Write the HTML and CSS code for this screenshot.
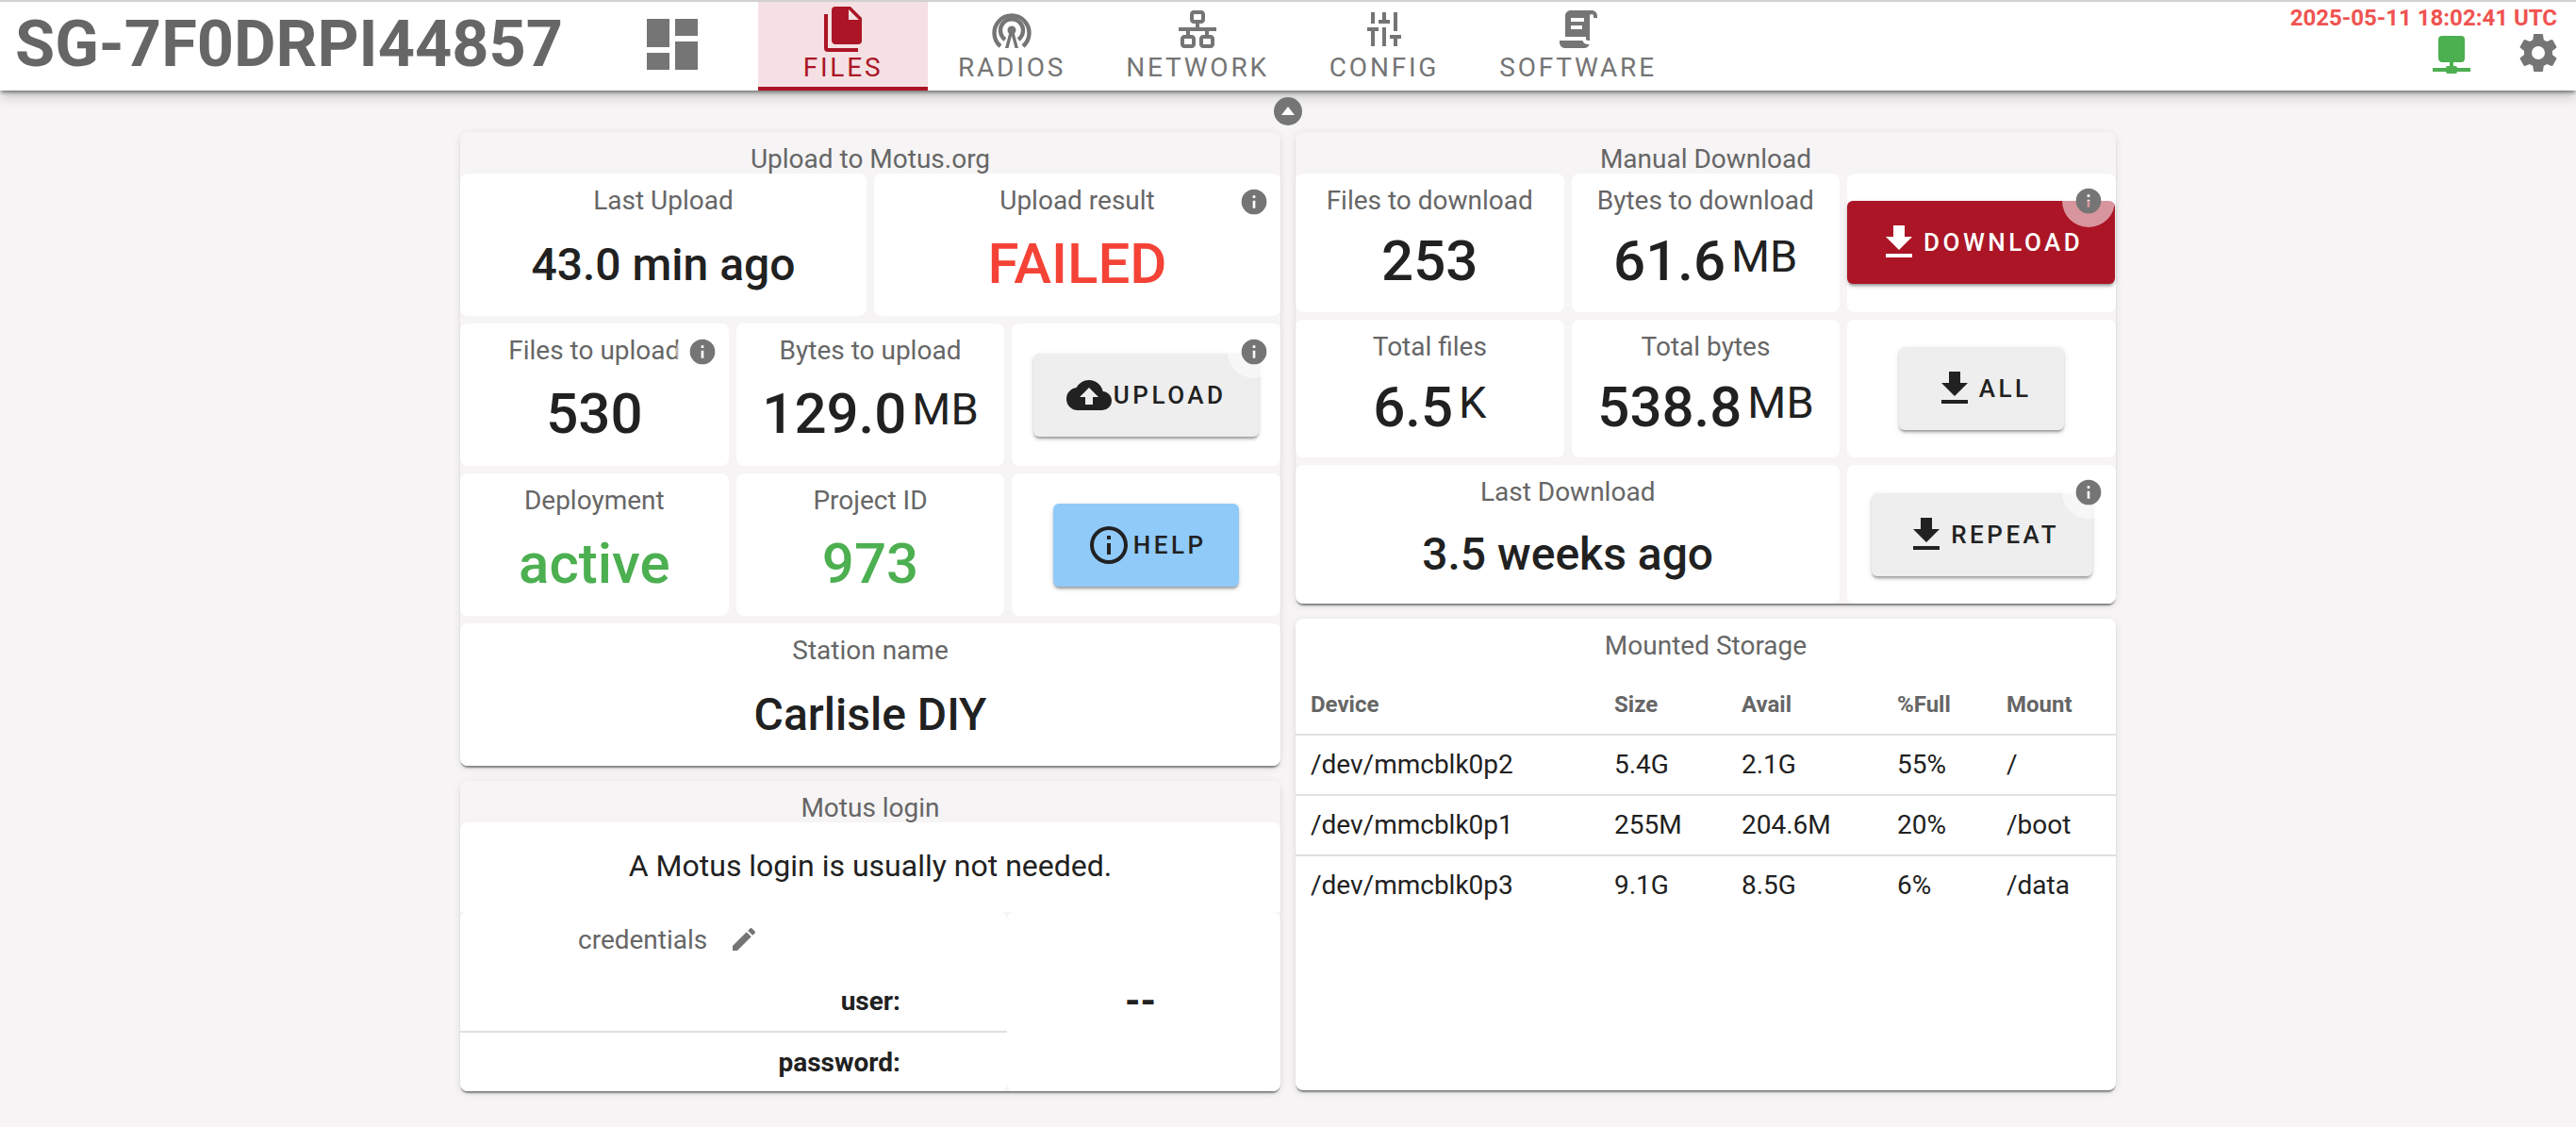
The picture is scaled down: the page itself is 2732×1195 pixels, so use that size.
FILE: index.html
```html
<!DOCTYPE html>
<html lang="en">
<head>
    <meta charset="UTF-8">
    <title>SG-7F0DRPI44857</title>
    <link rel="stylesheet" href="styles.css">
</head>
<body>
    <header class="topbar">
        <div class="station-id">SG-7F0DRPI44857</div>
        <svg class="icon icon-dash" viewBox="0 0 24 24"><path d="M13,3V9H21V3M13,21H21V11H13M3,21H11V15H3M3,13H11V3H3V13Z"/></svg>
        <nav class="tabs">
            <div class="tab active">
                <svg class="icon" viewBox="0 0 24 24"><path d="M15,7H20.5L15,1.5V7M8,0H16L22,6V18A2,2 0 0,1 20,20H8C6.89,20 6,19.1 6,18V2A2,2 0 0,1 8,0M4,4V22H20V24H4A2,2 0 0,1 2,22V4H4Z"/></svg>
                <span>FILES</span>
            </div>
            <div class="tab">
                <svg class="icon" viewBox="0 0 48 48"><circle cx="24" cy="25" r="4.5"/><path d="M21.5 27 L17 44 H20.5 L24 31 L27.5 44 H31 L26.5 27Z"/><path class="arc" d="M17 35 A12 12 0 1 1 31 35"/><path class="arc" d="M12 42 A18.5 18.5 0 1 1 36 42"/></svg>
                <span>RADIOS</span>
            </div>
            <div class="tab">
                <svg class="icon" viewBox="0 0 24 24"><path d="M10,2C8.89,2 8,2.89 8,4V7C8,8.11 8.89,9 10,9H11V11H2V13H6V15H5C3.89,15 3,15.89 3,17V20C3,21.11 3.89,22 5,22H9C10.11,22 11,21.11 11,20V17C11,15.89 10.11,15 9,15H8V13H16V15H15C13.89,15 13,15.89 13,17V20C13,21.11 13.89,22 15,22H19C20.11,22 21,21.11 21,20V17C21,15.89 20.11,15 19,15H18V13H22V11H13V9H14C15.11,9 16,8.11 16,7V4C16,2.89 15.11,2 14,2H10M10,4H14V7H10V4M5,17H9V20H5V17M15,17H19V20H15V17Z"/></svg>
                <span>NETWORK</span>
            </div>
            <div class="tab">
                <svg class="icon" viewBox="0 0 24 24"><path d="M5,3H7V9H5ZM3,11H9V13H7V21H5V13H3ZM11,3H13V7H15V9H9V7H11ZM11,11H13V21H11ZM17,3H19V13H17ZM15,15H21V17H19V21H17V17H15Z"/></svg>
                <span>CONFIG</span>
            </div>
            <div class="tab">
                <svg class="icon" viewBox="0 0 24 24"><path d="M17.8,20C17.4,21.2 16.3,22 15,22H5C3.3,22 2,20.7 2,19V18H5L14.2,18C14.6,19.2 15.7,20 17,20H17.8M19,2C20.7,2 22,3.3 22,5V6H20V5C20,4.4 19.6,4 19,4C18.4,4 18,4.4 18,5V18H17C16.4,18 16,17.6 16,17V16H5V5C5,3.3 6.3,2 8,2H19M8,6V8H15V6H8M8,10V12H14V10H8Z"/></svg>
                <span>SOFTWARE</span>
            </div>
        </nav>
        <div class="status">
            <div class="clock">2025-05-11 18:02:41 UTC</div>
            <div class="status-icons">
                <svg class="icon icon-ok" viewBox="0 0 24 24"><path d="M17,3A2,2 0 0,1 19,5V15A2,2 0 0,1 17,17H13V19H14A1,1 0 0,1 15,20H22V22H15A1,1 0 0,1 14,23H10A1,1 0 0,1 9,22H2V20H9A1,1 0 0,1 10,19H11V17H7C5.89,17 5,16.1 5,15V5A2,2 0 0,1 7,3H17Z"/></svg>
                <svg class="icon" viewBox="0 0 24 24"><path d="M12,15.5A3.5,3.5 0 0,1 8.5,12A3.5,3.5 0 0,1 12,8.5A3.5,3.5 0 0,1 15.5,12A3.5,3.5 0 0,1 12,15.5M19.43,12.97C19.47,12.65 19.5,12.33 19.5,12C19.5,11.67 19.47,11.34 19.43,11L21.54,9.37C21.73,9.22 21.78,8.95 21.66,8.73L19.66,5.27C19.54,5.05 19.27,4.96 19.05,5.05L16.56,6.05C16.04,5.66 15.5,5.32 14.87,5.07L14.5,2.42C14.46,2.18 14.25,2 14,2H10C9.75,2 9.54,2.18 9.5,2.42L9.13,5.07C8.5,5.32 7.96,5.66 7.44,6.05L4.95,5.05C4.73,4.96 4.46,5.05 4.34,5.27L2.34,8.73C2.21,8.95 2.27,9.22 2.46,9.37L4.57,11C4.53,11.34 4.5,11.67 4.5,12C4.5,12.33 4.53,12.65 4.57,12.97L2.46,14.63C2.27,14.78 2.21,15.05 2.34,15.27L4.34,18.73C4.46,18.95 4.73,19.03 4.95,18.95L7.44,17.94C7.96,18.34 8.5,18.68 9.13,18.93L9.5,21.58C9.54,21.82 9.75,22 10,22H14C14.25,22 14.46,21.82 14.5,21.58L14.87,18.93C15.5,18.67 16.04,18.34 16.56,17.94L19.05,18.95C19.27,19.03 19.54,18.95 19.66,18.73L21.66,15.27C21.78,15.05 21.73,14.78 21.54,14.63L19.43,12.97Z"/></svg>
            </div>
        </div>
    </header>

    <button class="collapse" type="button"><svg viewBox="0 0 30 30"><path d="M15 10 L22 19 H8Z"/></svg></button>

    <main class="columns">
        <div class="column">
            <section class="card">
                <h2 class="card-title">Upload to Motus.org</h2>
                <div class="row row-2">
                    <div class="cell">
                        <div class="label">Last Upload</div>
                        <div class="value value-text">43.0 min ago</div>
                    </div>
                    <div class="cell">
                        <div class="label">Upload result</div>
                        <div class="value value-bad">FAILED</div>
                        <span class="info"><svg viewBox="0 0 24 24"><path d="M13,9H11V7H13M13,17H11V11H13M12,2A10,10 0 0,0 2,12A10,10 0 0,0 12,22A10,10 0 0,0 22,12A10,10 0 0,0 12,2Z"/></svg></span>
                    </div>
                </div>
                <div class="row row-3">
                    <div class="cell">
                        <div class="label">Files to upload</div>
                        <div class="value">530</div>
                        <span class="info"><svg viewBox="0 0 24 24"><path d="M13,9H11V7H13M13,17H11V11H13M12,2A10,10 0 0,0 2,12A10,10 0 0,0 12,22A10,10 0 0,0 22,12A10,10 0 0,0 12,2Z"/></svg></span>
                    </div>
                    <div class="cell">
                        <div class="label">Bytes to upload</div>
                        <div class="value">129.0<span class="unit">MB</span></div>
                    </div>
                    <div class="cell cell-action">
                        <button class="btn" type="button">
                            <svg viewBox="0 0 24 24"><path d="M14,13V17H10V13H7L12,8L17,13M19.35,10.03C18.67,6.59 15.64,4 12,4C9.11,4 6.6,5.64 5.35,8.03C2.34,8.36 0,10.9 0,14A6,6 0 0,0 6,20H19A5,5 0 0,0 24,15C24,12.36 21.95,10.22 19.35,10.03Z"/></svg>
                            UPLOAD
                        </button>
                        <span class="info"><svg viewBox="0 0 24 24"><path d="M13,9H11V7H13M13,17H11V11H13M12,2A10,10 0 0,0 2,12A10,10 0 0,0 12,22A10,10 0 0,0 22,12A10,10 0 0,0 12,2Z"/></svg></span>
                    </div>
                </div>
                <div class="row row-3">
                    <div class="cell">
                        <div class="label">Deployment</div>
                        <div class="value value-good">active</div>
                    </div>
                    <div class="cell">
                        <div class="label">Project ID</div>
                        <div class="value value-good">973</div>
                    </div>
                    <div class="cell cell-action">
                        <button class="btn btn-help" type="button">
                            <svg viewBox="0 0 24 24"><path d="M11,9H13V7H11M12,20C7.59,20 4,16.41 4,12C4,7.59 7.59,4 12,4C16.41,4 20,7.59 20,12C20,16.41 16.41,20 12,20M12,2A10,10 0 0,0 2,12A10,10 0 0,0 12,22A10,10 0 0,0 22,12A10,10 0 0,0 12,2M11,17H13V11H11V17Z"/></svg>
                            HELP
                        </button>
                    </div>
                </div>
                <div class="row">
                    <div class="cell">
                        <div class="label">Station name</div>
                        <div class="value value-text">Carlisle DIY</div>
                    </div>
                </div>
            </section>

            <section class="card card-fill">
                <h2 class="card-title">Motus login</h2>
                <div class="login-note">A Motus login is usually not needed.</div>
                <div class="login-grid">
                    <div class="login-left">
                        <div class="credentials">
                            credentials
                            <svg viewBox="0 0 24 24"><path d="M20.71,7.04C21.1,6.65 21.1,6 20.71,5.63L18.37,3.29C18,2.9 17.35,2.9 16.96,3.29L15.12,5.12L18.87,8.87M3,17.25V21H6.75L17.81,9.93L14.06,6.18L3,17.25Z"/></svg>
                        </div>
                        <div class="login-row login-row-line">user:</div>
                        <div class="login-row">password:</div>
                    </div>
                    <div class="login-right">--</div>
                </div>
            </section>
        </div>

        <div class="column">
            <section class="card card-dl">
                <h2 class="card-title">Manual Download</h2>
                <div class="row row-3">
                    <div class="cell">
                        <div class="label">Files to download</div>
                        <div class="value">253</div>
                    </div>
                    <div class="cell">
                        <div class="label">Bytes to download</div>
                        <div class="value">61.6<span class="unit">MB</span></div>
                    </div>
                    <div class="cell cell-action">
                        <button class="btn btn-primary" type="button">
                            <svg viewBox="0 0 24 24"><path d="M5,20H19V18H5M19,9H15V3H9V9H5L12,16L19,9Z"/></svg>
                            DOWNLOAD
                        </button>
                        <span class="info info-tight"><svg viewBox="0 0 24 24"><path d="M13,9H11V7H13M13,17H11V11H13M12,2A10,10 0 0,0 2,12A10,10 0 0,0 12,22A10,10 0 0,0 22,12A10,10 0 0,0 12,2Z"/></svg></span>
                    </div>
                </div>
                <div class="row row-3">
                    <div class="cell">
                        <div class="label">Total files</div>
                        <div class="value">6.5<span class="unit">K</span></div>
                    </div>
                    <div class="cell">
                        <div class="label">Total bytes</div>
                        <div class="value">538.8<span class="unit">MB</span></div>
                    </div>
                    <div class="cell cell-action">
                        <button class="btn" type="button">
                            <svg viewBox="0 0 24 24"><path d="M5,20H19V18H5M19,9H15V3H9V9H5L12,16L19,9Z"/></svg>
                            ALL
                        </button>
                    </div>
                </div>
                <div class="row row-3">
                    <div class="cell cell-wide">
                        <div class="label">Last Download</div>
                        <div class="value value-text">3.5 weeks ago</div>
                    </div>
                    <div class="cell cell-action">
                        <button class="btn" type="button">
                            <svg viewBox="0 0 24 24"><path d="M5,20H19V18H5M19,9H15V3H9V9H5L12,16L19,9Z"/></svg>
                            REPEAT
                        </button>
                        <span class="info info-tight"><svg viewBox="0 0 24 24"><path d="M13,9H11V7H13M13,17H11V11H13M12,2A10,10 0 0,0 2,12A10,10 0 0,0 12,22A10,10 0 0,0 22,12A10,10 0 0,0 12,2Z"/></svg></span>
                    </div>
                </div>
            </section>

            <section class="card card-fill card-white">
                <h2 class="card-title">Mounted Storage</h2>
                <table class="storage">
                    <thead>
                        <tr><th class="col-device">Device</th><th class="col-size">Size</th><th class="col-avail">Avail</th><th class="col-full">%Full</th><th>Mount</th></tr>
                    </thead>
                    <tbody>
                        <tr><td>/dev/mmcblk0p2</td><td>5.4G</td><td>2.1G</td><td>55%</td><td>/</td></tr>
                        <tr><td>/dev/mmcblk0p1</td><td>255M</td><td>204.6M</td><td>20%</td><td>/boot</td></tr>
                        <tr><td>/dev/mmcblk0p3</td><td>9.1G</td><td>8.5G</td><td>6%</td><td>/data</td></tr>
                    </tbody>
                </table>
            </section>
        </div>
    </main>
</body>
</html>
```
FILE: styles.css
```css
* {
    box-sizing: border-box;
}
html, body {
    height: 100%;
}
body {
    margin: 0;
    overflow: hidden;
    background-color: #f6f4f5;
    font-family: Roboto, "Liberation Sans", sans-serif;
    color: #212121;
}
.icon {
    display: block;
    width: 48px;
    height: 48px;
    fill: #757575;
}
.topbar {
    position: relative;
    display: flex;
    height: 96px;
    background-color: white;
    border-top: 2px solid #d0d0d0;
    box-shadow: 0 3px 4px -1px rgba(0,0,0,0.45), 0 6px 14px rgba(0,0,0,0.2);
}
.station-id {
    width: 677px;
    padding-left: 16px;
    font-size: 68.5px;
    font-weight: 700;
    line-height: 90px;
    color: #666;
    white-space: nowrap;
}
.icon-dash {
    width: 72px;
    height: 72px;
    margin-top: 9px;
}
.tabs {
    display: flex;
    margin-left: 55px;
}
.tab {
    display: flex;
    flex-direction: column;
    align-items: center;
    min-width: 178px;
    padding: 5px 32px 0;
    font-size: 28px;
    line-height: 30px;
    letter-spacing: 2.8px;
    color: #757575;
}
.tab span {
    margin-top: 2px;
}
.tab.active {
    width: 180px;
    color: #ab1526;
    background-color: #f5e1e3;
    border-bottom: 4px solid #ab1526;
}
.tab.active .icon {
    fill: #ab1526;
}
.arc {
    fill: none;
    stroke: #757575;
    stroke-width: 4.4;
}
.status {
    display: flex;
    flex-direction: column;
    align-items: flex-end;
    margin-left: auto;
    padding-right: 16px;
}
.clock {
    height: 30px;
    margin-right: 4px;
    font-size: 24px;
    font-weight: 700;
    line-height: 34px;
    color: #ef5350;
    white-space: nowrap;
}
.status-icons {
    display: flex;
    gap: 44px;
}
.icon-ok {
    fill: #4caf50;
}
.collapse {
    position: absolute;
    top: 103px;
    left: 1351px;
    width: 30px;
    height: 30px;
    padding: 0;
    background-color: #757575;
    border: none;
    border-radius: 50%;
}
.collapse svg {
    display: block;
    fill: white;
}
.columns {
    display: grid;
    grid-template-columns: 870px 870px;
    justify-content: center;
    gap: 16px;
    padding-top: 44px;
}
.column {
    display: flex;
    flex-direction: column;
    gap: 16px;
    height: 1016px;
}
.card {
    border-radius: 8px;
    background-color: #f6f4f5;
    box-shadow: 0 3px 2px -1px rgba(0,0,0,0.45), 0 2px 8px rgba(0,0,0,0.1);
}
.card-fill {
    flex: 1;
    display: flex;
    flex-direction: column;
}
.card-white {
    background-color: white;
}
.card-title {
    height: 44px;
    margin: 0;
    font-size: 28px;
    font-weight: 400;
    line-height: 58px;
    text-align: center;
    color: #666;
    overflow: hidden;
}
.row {
    display: grid;
    gap: 8px;
    margin-bottom: 8px;
}
.row:last-child {
    margin-bottom: 0;
}
.row-2 {
    grid-template-columns: repeat(2, 1fr);
}
.row-3 {
    grid-template-columns: repeat(3, 1fr);
}
.cell {
    position: relative;
    display: flex;
    flex-direction: column;
    height: 151px;
    padding-top: 12px;
    background-color: white;
    border-radius: 8px;
    text-align: center;
}
.card-dl .cell {
    height: 146.67px;
}
.cell-wide {
    grid-column: span 2;
}
.card-dl .cell-action, .cell-action {
    align-items: center;
    justify-content: center;
    padding-top: 0;
}
.label {
    font-size: 28px;
    line-height: 34px;
    color: #666;
}
.value {
    flex: 1;
    display: flex;
    align-items: center;
    justify-content: center;
    padding-bottom: 7px;
    font-size: 60px;
    font-weight: 500;
    white-space: nowrap;
}
.value-text {
    padding-bottom: 5px;
    font-size: 48px;
}
.value-bad {
    color: #f44336;
}
.value-good {
    color: #4caf50;
}
.unit {
    margin: -10px 0 0 6px;
    font-size: 47px;
    font-weight: 400;
}
.info {
    position: absolute;
    top: 2px;
    right: 0;
    display: flex;
    align-items: center;
    justify-content: center;
    width: 56px;
    height: 56px;
    background-color: rgba(255,255,255,0.55);
    border-radius: 50%;
}
.info-tight {
    top: 1px;
    right: 1px;
}
.info svg {
    width: 32px;
    height: 32px;
    fill: #757575;
}
.btn {
    display: flex;
    align-items: center;
    flex-shrink: 0;
    height: 88px;
    padding: 0 34.5px;
    background-color: #eeeeee;
    border: none;
    border-radius: 6px;
    box-shadow: 0 3px 3px -1px rgba(0,0,0,0.35), 0 2px 6px rgba(0,0,0,0.12);
    font-family: inherit;
    font-size: 26px;
    font-weight: 500;
    letter-spacing: 3.5px;
    color: #212121;
}
.btn svg {
    width: 48px;
    height: 48px;
    margin-right: 2px;
    fill: currentColor;
}
.btn-primary {
    width: 284px;
    margin-right: 1px;
    padding: 0 0 0 31px;
    background-color: #ab1526;
    color: white;
}
.btn-help {
    background-color: #90caf9;
}
.login-note {
    height: 95px;
    padding-top: 27px;
    background-color: white;
    border-radius: 8px 8px 0 0;
    font-size: 32px;
    line-height: 38px;
    text-align: center;
}
.login-grid {
    flex: 1;
    display: grid;
    grid-template-columns: 580px 290px;
}
.login-left, .login-right {
    background-color: white;
    border-radius: 8px;
}
.credentials {
    display: flex;
    align-items: center;
    height: 64px;
    padding: 0 0 6px 125px;
    font-size: 28px;
    color: #666;
}
.credentials svg {
    width: 32px;
    height: 32px;
    margin-left: 23px;
    fill: #757575;
}
.login-row {
    height: 62px;
    padding-right: 113px;
    font-size: 28px;
    font-weight: 700;
    line-height: 64px;
    text-align: right;
}
.login-row-line {
    height: 64px;
    line-height: 62px;
    border-bottom: 2px solid #e0e0e0;
}
.login-right {
    padding: 78px 7px 0 0;
    font-size: 42px;
    font-weight: 700;
    line-height: 34px;
    text-align: center;
}
.storage {
    width: 100%;
    margin-top: 15px;
    border-collapse: collapse;
    table-layout: fixed;
}
.storage th, .storage td {
    padding: 0 0 0 16px;
    text-align: left;
    height: 64px;
    border-bottom: 2px solid #e0e0e0;
}
.storage th {
    padding-top: 2px;
    font-size: 24px;
    font-weight: 700;
    color: #666;
}
.storage td {
    padding-bottom: 1px;
    font-size: 28px;
}
.storage tr:last-child td {
    border-bottom: none;
}
.col-device {
    width: 322px;
}
.col-size {
    width: 135px;
}
.col-avail {
    width: 165px;
}
.col-full {
    width: 116px;
}
```
